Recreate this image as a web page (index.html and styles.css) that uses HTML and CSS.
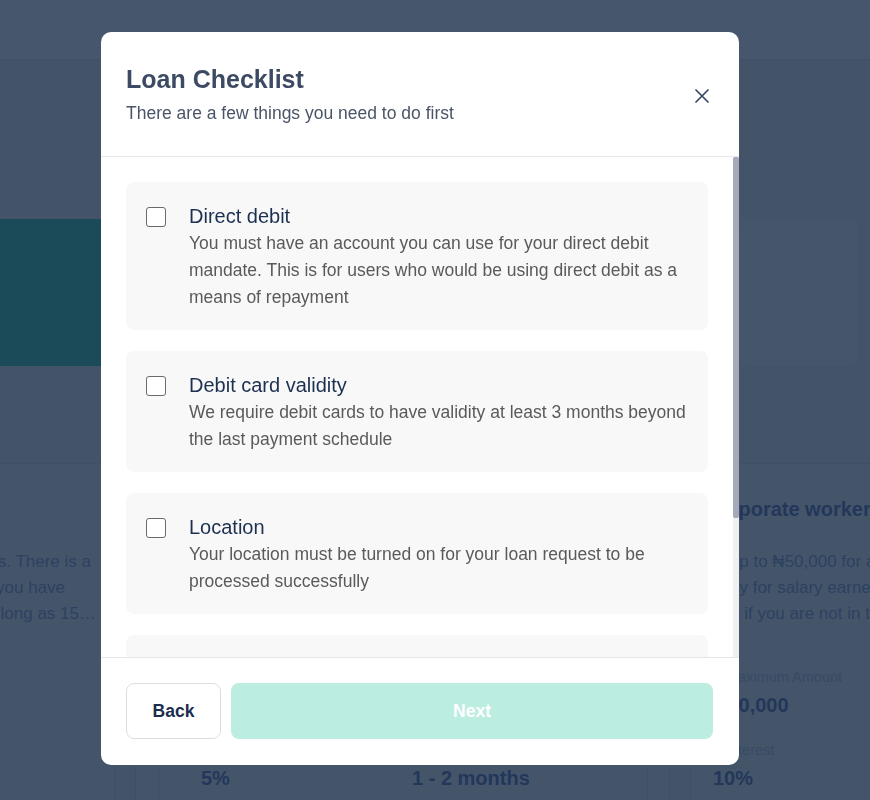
FILE: index.html
```html
<!DOCTYPE html>
<html lang="en">
<head>
<meta charset="utf-8">
<title>Loan Checklist</title>
<link rel="stylesheet" href="styles.css">
</head>
<body>
<div class="page">
  <header class="topbar"></header>
  <section class="hero">
    <div class="hero-banner"></div>
    <div class="hero-card"></div>
  </section>
  <section class="plans">
    <article class="plan">
      <h3 class="plan-title">Personal loan</h3>
      <div class="plan-desc plan-desc-right">
        <div class="line line-first"><span>Get quick loans to cover urgent needs and expenses. There is a</span></div>
        <div class="line line-short"><span>flexible repayment plan that suits you as long as you have</span></div>
        <div class="line"><span>a steady source of income, and you can repay for as long as 15…</span></div>
      </div>
    </article>
    <article class="plan">
      <h3 class="plan-title">Small business owner</h3>
      <div class="plan-desc">
        <div class="line">Borrow up to ₦20,000 for your business needs.</div>
        <div class="line">Repayment is flexible for traders and owners.</div>
        <div class="line">Only available for registered businesses.</div>
      </div>
      <div class="stat-box">
        <div class="stat"><div class="stat-label">Maximum Amount</div><div class="stat-value">₦20,000</div></div>
        <div class="stat"><div class="stat-label">Minimum Amount</div><div class="stat-value">₦5,000</div></div>
        <div class="stat"><div class="stat-label">Interest</div><div class="stat-value">5%</div></div>
        <div class="stat"><div class="stat-label">Duration</div><div class="stat-value">1 - 2 months</div></div>
      </div>
    </article>
    <article class="plan">
      <h3 class="plan-title plan-title-shift">Corporate worker</h3>
      <div class="plan-desc">
        <div class="line line-indent">Up to ₦50,000 for a month</div>
        <div class="line">Only for salary earners</div>
        <div class="line">Not if you are not in the</div>
      </div>
      <div class="stat-list">
        <div class="stat"><div class="stat-label stat-label-shift">Maximum Amount</div><div class="stat-value">₦50,000</div></div>
        <div class="stat"><div class="stat-label stat-label-shift">Interest</div><div class="stat-value">10%</div></div>
      </div>
    </article>
  </section>
</div>

<div class="overlay">
  <div class="modal" role="dialog" aria-labelledby="modal-title">
    <div class="modal-header">
      <div class="modal-heading">
        <h2 id="modal-title" class="modal-title">Loan Checklist</h2>
        <p class="modal-subtitle">There are a few things you need to do first</p>
      </div>
      <button class="close-btn" aria-label="Close">
        <svg width="14" height="14" viewBox="0 0 14 14"><path d="M1 1 L13 13 M13 1 L1 13" stroke="#3b4a63" stroke-width="1.7" stroke-linecap="round" fill="none"/></svg>
      </button>
    </div>
    <div class="modal-scroll">
      <div class="modal-body">
        <label class="check-item">
          <input type="checkbox" class="check-box">
          <span class="check-text">
            <span class="check-title">Direct debit</span>
            <span class="check-desc">You must have an account you can use for your direct debit mandate. This is for users who would be using direct debit as a means of repayment</span>
          </span>
        </label>
        <label class="check-item">
          <input type="checkbox" class="check-box">
          <span class="check-text">
            <span class="check-title">Debit card validity</span>
            <span class="check-desc">We require debit cards to have validity at least 3 months beyond the last payment schedule</span>
          </span>
        </label>
        <label class="check-item">
          <input type="checkbox" class="check-box">
          <span class="check-text">
            <span class="check-title">Location</span>
            <span class="check-desc">Your location must be turned on for your loan request to be processed successfully</span>
          </span>
        </label>
        <label class="check-item">
          <input type="checkbox" class="check-box">
          <span class="check-text">
            <span class="check-title">Bank Verification Number</span>
            <span class="check-desc">Your BVN must match the name on your bank account and the phone number you registered with, so that we can verify your identity</span>
          </span>
        </label>
      </div>
      <div class="scrollbar" aria-hidden="true"><div class="scrollbar-thumb"></div></div>
    </div>
    <div class="modal-footer">
      <button class="btn btn-back">Back</button>
      <button class="btn btn-next" disabled>Next</button>
    </div>
  </div>
</div>
</body>
</html>
```

FILE: styles.css
```css
* { box-sizing: border-box; }

html, body {
  margin: 0;
  padding: 0;
}

body {
  width: 870px;
  height: 800px;
  overflow: hidden;
  background: #435469;
  font-family: "Liberation Sans", Arial, sans-serif;
}

.page {
  width: 870px;
  height: 800px;
  overflow: hidden;
}

.topbar {
  height: 60px;
  background: #46566c;
  border-bottom: 1px solid #3f5065;
}

.hero {
  display: flex;
  margin-top: 159px;
  height: 147px;
}

.hero-banner {
  flex: 0 0 720px;
  background: #1b4a59;
}

.hero-card {
  flex: 0 0 119px;
  margin-left: 19px;
  background: #45566b;
  border-radius: 10px;
}

.plans {
  display: flex;
  gap: 20px;
  margin-top: 97px;
  margin-left: -420px;
}

.plan {
  flex: none;
  width: 535px;
  min-width: 0;
  background: #44556a;
  border: 1px solid #3f5065;
  border-radius: 10px;
  padding: 30px 18px 30px 22px;
  height: 400px;
}

.plan-title {
  margin: 0;
  font-size: 20px;
  line-height: 30px;
  font-weight: 700;
  color: #23375a;
  white-space: nowrap;
}

.plan-title-shift { margin-left: -9px; }

.plan-desc {
  margin-top: 25px;
  font-size: 17px;
  line-height: 26px;
  color: #2d4160;
}

.plan-desc .line {
  white-space: nowrap;
  overflow: hidden;
}

.plan-desc .line-indent { padding-left: 14px; }

.plan-desc-right .line {
  display: flex;
  justify-content: flex-end;
}

.plan-desc-right .line span { flex: none; }
.plan-desc-right .line-first { padding-right: 5px; }
.plan-desc-right .line-short { padding-right: 31px; }

.stat-box {
  margin-top: 26px;
  width: 490px;
  border: 1px solid #3f5065;
  padding: 13px 0 20px 42px;
  display: grid;
  grid-template-columns: 211px 211px;
  row-gap: 21px;
}

.stat-list {
  margin-top: 40px;
  display: flex;
  flex-direction: column;
  gap: 21px;
}

.stat-label {
  font-size: 14.5px;
  line-height: 20px;
  color: #374a64;
  white-space: nowrap;
}

.stat-label-shift { margin-left: 13px; }

.stat-value {
  margin-top: 4px;
  font-size: 20px;
  line-height: 28px;
  font-weight: 700;
  color: #23375a;
  white-space: nowrap;
}

/* Modal */
.overlay {
  position: fixed;
  inset: 0;
  display: flex;
  align-items: flex-start;
  justify-content: flex-start;
  padding: 32px 0 0 101px;
}

.modal {
  width: 638px;
  height: 733px;
  background: #ffffff;
  border-radius: 10px;
  display: flex;
  flex-direction: column;
  overflow: hidden;
}

.modal-header {
  display: flex;
  align-items: center;
  justify-content: space-between;
  padding: 32px 30px 31px 25px;
  border-bottom: 1px solid #e7e8eb;
}

.modal-title {
  margin: 0;
  font-size: 25px;
  line-height: 30px;
  font-weight: 700;
  color: #3d4a63;
}

.modal-subtitle {
  margin: 7px 0 0;
  font-size: 17.5px;
  line-height: 24px;
  color: #4a5568;
}

.close-btn {
  display: flex;
  align-items: center;
  justify-content: center;
  width: 14px;
  height: 14px;
  padding: 0;
  border: 0;
  background: none;
  cursor: pointer;
  margin-top: 2px;
}

.modal-scroll {
  position: relative;
  flex: 1;
  min-height: 0;
}

.modal-body {
  height: 100%;
  overflow: hidden;
  padding: 25px 25px 40px 25px;
  display: flex;
  flex-direction: column;
  gap: 21px;
}

.scrollbar {
  position: absolute;
  top: 0;
  right: 0;
  bottom: 0;
  width: 6px;
  background: #f0f0f3;
}

.scrollbar-thumb {
  height: 361px;
  background: #a5a9b9;
  border-radius: 2px;
}

.check-item {
  flex: none;
  display: flex;
  align-items: flex-start;
  gap: 23px;
  width: 582px;
  padding: 22px 20px 19px 20px;
  background: #f8f8f8;
  border-radius: 8px;
  cursor: pointer;
}

.check-box {
  appearance: none;
  -webkit-appearance: none;
  flex: none;
  width: 20px;
  height: 20px;
  margin: 3px 0 0;
  border: 1.5px solid #6a6a6a;
  border-radius: 3px;
  background: #ffffff;
}

.check-text {
  display: flex;
  flex-direction: column;
}

.check-title {
  font-size: 20px;
  line-height: 24px;
  color: #1c3050;
}

.check-desc {
  margin-top: 2px;
  font-size: 17.5px;
  line-height: 27px;
  color: #5a5a5a;
}

.modal-footer {
  display: flex;
  gap: 10px;
  padding: 25px 26px 26px 25px;
  border-top: 1px solid #e6e6ea;
}

.btn {
  height: 56px;
  border-radius: 8px;
  font-family: "Liberation Sans", Arial, sans-serif;
  font-size: 17.5px;
  font-weight: 700;
}

.btn-back {
  width: 95px;
  background: #ffffff;
  border: 1px solid #dcdde2;
  color: #1b2d50;
}

.btn-next {
  flex: 1;
  background: #bcede1;
  border: 0;
  color: #ffffff;
}
```
